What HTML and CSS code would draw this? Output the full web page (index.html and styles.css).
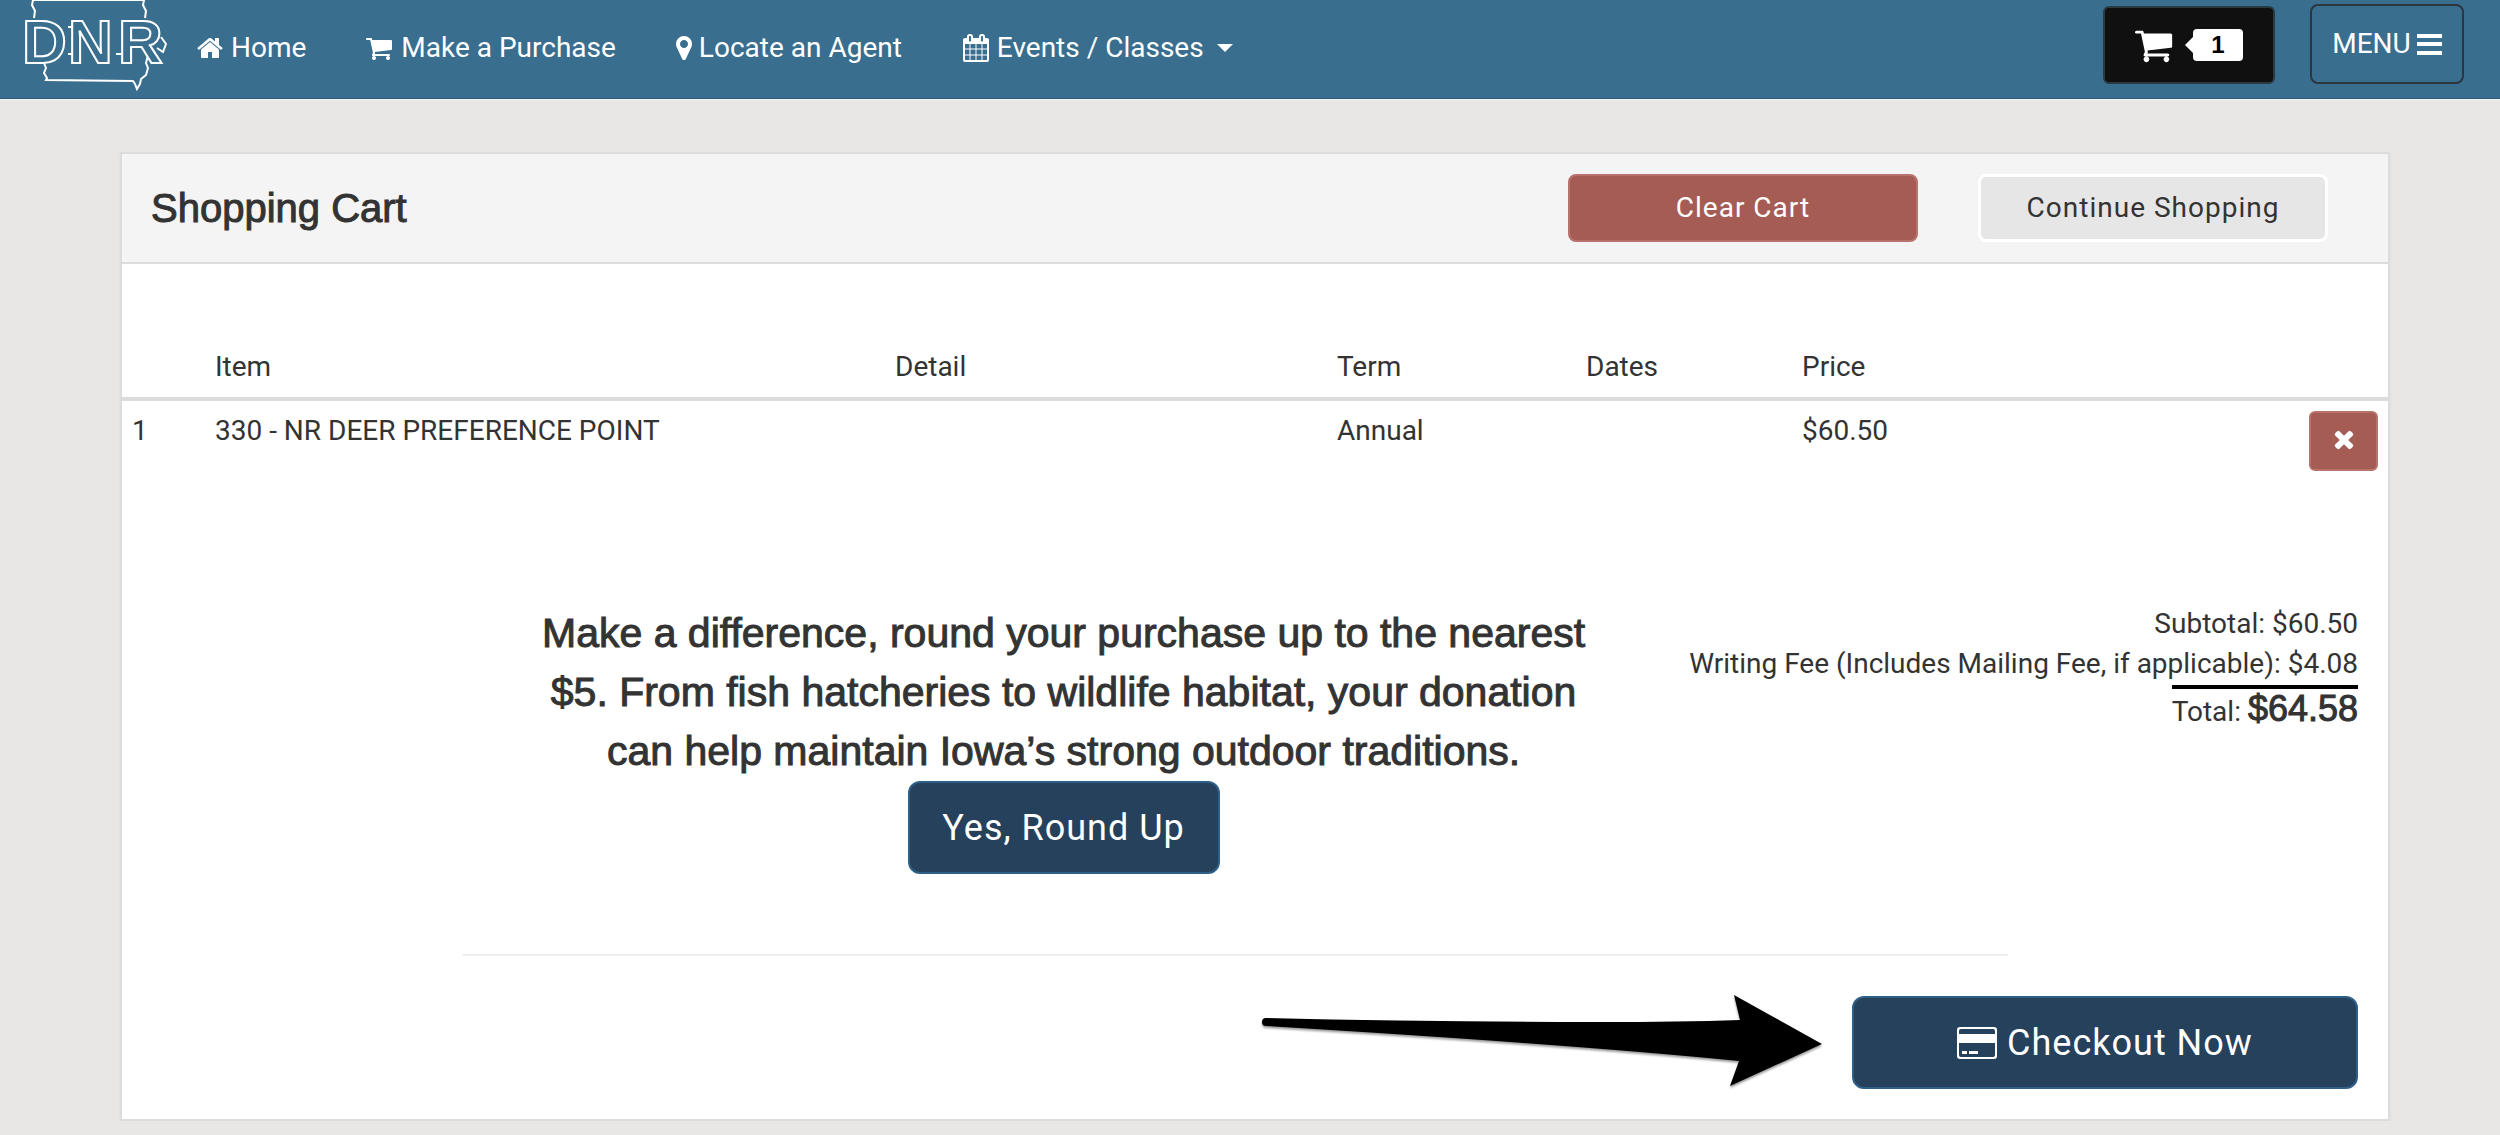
FILE: index.html
```html
<!DOCTYPE html>
<html lang="en">
<head>
<meta charset="utf-8">
<title>Shopping Cart</title>
<link rel="stylesheet" href="styles.css">
</head>
<body>
<svg class="defs" aria-hidden="true">
  <symbol id="cart" viewBox="0 0 1792 1792"><path d="M640 1536q0 52-38 90t-90 38-90-38-38-90 38-90 90-38 90 38 38 90zm896 0q0 52-38 90t-90 38-90-38-38-90 38-90 90-38 90 38 38 90zm128-1088v512q0 24-16.500 42.500t-40.500 21.500l-1044 122q13 60 13 70 0 16-24 64h920q26 0 45 19t19 45-19 45-45 19h-1024q-26 0-45-19t-19-45q0-11 8-31.500t16-36 21.500-40 15.500-29.500l-177-823h-204q-26 0-45-19t-19-45 19-45 45-19h256q16 0 28.500 6.500t19.500 15.500 13 24.500 8 26 5.500 29.500 4.500 26h1201q26 0 45 19t19 45z"/></symbol>
</svg>
<header class="navbar">
  <a class="brand" href="#" aria-label="DNR home">
    <svg class="brand-logo" viewBox="0 0 150 92">
      <path class="state" d="M9 0l-1 5 3 6-1 7M9 0h111l-1 5 3 6-1 7M20 63l2 5-2 5 3 5-1 2 87 1 2 3 2 5 3-5 1-5 5-4 2-7-2-5 2-8M137 37l5 7-3 8-6-4M44 27h5M44 54h5M92 54h6"/>
      <text class="brand-text" x="-2 44 94" y="63">DNR</text>
    </svg>
  </a>
  <nav class="links">
    <a class="link" href="#"><svg class="icon" viewBox="0 0 1792 1792"><path d="M1472 992v480q0 26-19 45t-45 19h-384v-384h-256v384h-384q-26 0-45-19t-19-45v-480q0-1 .5-3t.5-3l575-474 575 474q1 2 1 6zm223-69l-62 74q-8 9-21 11h-3q-13 0-21-7l-692-577-692 577q-12 8-24 7-13-2-21-11l-62-74q-8-10-7-23.500t11-21.500l719-599q32-26 76-26t76 26l244 204v-195q0-14 9-23t23-9h192q14 0 23 9t9 23v408l219 182q10 8 11 21.500t-7 23.500z"/></svg>Home</a>
    <a class="link" href="#"><svg class="icon"><use href="#cart"/></svg>Make a Purchase</a>
    <a class="link" href="#"><svg class="icon icon-narrow" viewBox="384 0 1024 1792"><path d="M1152 640q0-106-75-181t-181-75-181 75-75 181 75 181 181 75 181-75 75-181zm256 0q0 109-33 179l-364 774q-16 33-47.500 52t-67.500 19-67.500-19-46.500-52l-365-774q-33-70-33-179 0-212 150-362t362-150 362 150 150 362z"/></svg>Locate an Agent</a>
    <a class="link" href="#"><svg class="icon" viewBox="0 0 1792 1792"><path d="M192 1664h288v-288h-288v288zm352 0h320v-288h-320v288zm-352-352h288v-320h-288v320zm352 0h320v-320h-320v320zm-352-384h288v-288h-288v288zm736 736h320v-288h-320v288zm-384-736h320v-288h-320v288zm768 736h288v-288h-288v288zm-384-352h320v-320h-320v320zm-352-864v-288q0-13-9.500-22.500t-22.500-9.500h-64q-13 0-22.500 9.500t-9.500 22.500v288q0 13 9.500 22.500t22.500 9.500h64q13 0 22.500-9.500t9.500-22.500zm736 864h288v-320h-288v320zm-384-384h320v-288h-320v288zm384 0h288v-288h-288v288zm32-480v-288q0-13-9.500-22.500t-22.500-9.500h-64q-13 0-22.500 9.500t-9.500 22.500v288q0 13 9.500 22.500t22.500 9.500h64q13 0 22.500-9.500t9.500-22.500zm384-64v1280q0 52-38 90t-90 38h-1408q-52 0-90-38t-38-90v-1280q0-52 38-90t90-38h128v-96q0-66 47-113t113-47h64q66 0 113 47t47 113v96h384v-96q0-66 47-113t113-47h64q66 0 113 47t47 113v96h128q52 0 90 38t38 90z"/></svg>Events / Classes<span class="caret"></span></a>
  </nav>
  <div class="tools">
    <button class="cart-button" type="button" aria-label="Cart, 1 item"><svg class="cart-icon"><use href="#cart"/></svg><span class="badge">1</span></button>
    <button class="menu-button" type="button">MENU<span class="bars"></span></button>
  </div>
</header>
<main class="card">
  <div class="card-head">
    <h1 class="title">Shopping Cart</h1>
    <div class="actions">
      <button class="btn btn-danger" type="button">Clear Cart</button>
      <button class="btn btn-light" type="button">Continue Shopping</button>
    </div>
  </div>
  <table class="items">
    <thead>
      <tr><th class="c-num"></th><th class="c-item">Item</th><th class="c-detail">Detail</th><th class="c-term">Term</th><th class="c-dates">Dates</th><th class="c-price">Price</th><th></th></tr>
    </thead>
    <tbody>
      <tr><td>1</td><td>330 - NR DEER PREFERENCE POINT</td><td></td><td>Annual</td><td></td><td>$60.50</td><td class="remove-cell"><button class="remove" type="button" aria-label="Remove item"><svg class="icon" viewBox="0 0 1792 1792"><path d="M1490 1322q0 40-28 68l-136 136q-28 28-68 28t-68-28l-294-294-294 294q-28 28-68 28t-68-28l-136-136q-28-28-28-68t28-68l294-294-294-294q-28-28-28-68t28-68l136-136q28-28 68-28t68 28l294 294 294-294q28-28 68-28t68 28l136 136q28 28 28 68t-28 68l-294 294 294 294q28 28 28 68z"/></svg></button></td></tr>
    </tbody>
  </table>
  <div class="summary">
    <section class="donate">
      <h2 class="donate-text">Make a difference, round your purchase up to the nearest<br>$5. From fish hatcheries to wildlife habitat, your donation<br>can help maintain Iowa’s strong outdoor traditions.</h2>
      <button class="btn-primary" type="button">Yes, Round Up</button>
    </section>
    <section class="totals">
      <div>Subtotal: $60.50</div>
      <div>Writing Fee (Includes Mailing Fee, if applicable): $4.08</div>
      <div class="total">Total: <strong class="amount">$64.58</strong></div>
    </section>
  </div>
  <hr class="rule">
  <div class="checkout-row">
    <svg class="arrow" viewBox="0 0 564 100"><path d="M6 27Q170 31 340 31Q420 31 480 29L474 4L562 53L470 95L479 70Q320 54 6 35A4 4 0 0 1 6 27z"/></svg>
    <button class="btn-primary checkout" type="button"><svg class="card-icon" viewBox="0 0 40 32"><path fill-rule="evenodd" d="M3 0h34a3 3 0 0 1 3 3v26a3 3 0 0 1-3 3H3a3 3 0 0 1-3-3V3a3 3 0 0 1 3-3zM2 4v3h36V4q0-2-2-2H4q-2 0-2 2zM2 16v12q0 2 2 2h32q2 0 2-2V16zM5 24h5v3H5zM12 24h9v3h-9z"/></svg>Checkout Now</button>
  </div>
</main>
</body>
</html>
```
FILE: styles.css
```css
* { box-sizing: border-box; }
body {
  margin: 0;
  background: #e8e7e6;
  color: #333;
  font: 28px/40px Roboto, sans-serif;
}
button { font: inherit; color: inherit; padding: 0; }
.defs { display: none; }

.navbar {
  display: flex;
  align-items: flex-start;
  height: 99px;
  padding: 0 36px 0 24px;
  background: #396e8f;
  border-bottom: 1px solid #2e5676;
  box-shadow: 0 1px 0 #f2f4f6;
  color: #fff;
}
.brand { width: 144px; }
.brand-logo { display: block; width: 150px; height: 92px; overflow: visible; }
.state { fill: none; stroke: #fff; stroke-width: 2; }
.brand-text {
  font: bold 62px "Liberation Sans", sans-serif;
  fill: #396e8f;
  stroke: #fff;
  stroke-width: 2;
}
.links { display: flex; gap: 60px; padding: 28px 0 0 28px; }
.link { display: flex; align-items: center; gap: 7px; color: #fff; text-decoration: none; }
.icon { width: 28px; height: 28px; fill: currentColor; }
.icon-narrow { width: 16px; }
.caret { margin-left: 6px; border: 8px solid transparent; border-top-color: #fff; border-bottom: 0; }
.tools { display: flex; gap: 35px; margin-left: auto; padding-top: 4px; }
.cart-button {
  display: flex;
  align-items: center;
  justify-content: center;
  gap: 18px;
  width: 172px;
  height: 78px;
  margin-top: 2px;
  border: 2px solid #2a3a44;
  border-radius: 6px;
  background: #101010;
  color: #fff;
}
.cart-icon { width: 40px; height: 40px; fill: #fff; }
.badge {
  position: relative;
  width: 50px;
  border-radius: 4px;
  background: #fff;
  color: #000;
  font: bold 24px/32px "Liberation Sans", sans-serif;
}
.badge::before {
  content: "";
  position: absolute;
  left: -8px;
  top: 8px;
  border: 8px solid transparent;
  border-right-color: #fff;
  border-left: 0;
}
.menu-button {
  display: flex;
  align-items: center;
  justify-content: center;
  gap: 6px;
  width: 154px;
  height: 80px;
  border: 2px solid #2b3640;
  border-radius: 8px;
  background: none;
}
.bars { width: 25px; height: 21px; border: solid #fff; border-width: 4px 0; background: linear-gradient(#fff, #fff) center / 100% 4px no-repeat; }

.card {
  margin: 53px 110px 0 120px;
  border: 2px solid #dcdcdc;
  background: #fff;
  box-shadow: 0 2px 2px #d8d8d8;
}
.card-head {
  display: flex;
  align-items: center;
  justify-content: space-between;
  height: 110px;
  padding: 0 60px 0 29px;
  border-bottom: 2px solid #dcdcdc;
  background: #f4f4f4;
}
.title, .donate-text { margin: 0; font-family: "Liberation Sans", sans-serif; font-weight: 400; -webkit-text-stroke: 1px #333; }
.title { font-size: 40px; }
.actions { display: flex; gap: 60px; }
.btn { width: 350px; height: 68px; border-radius: 8px; letter-spacing: 1px; }
.btn-danger { border: 2px solid #b9736d; background: #a55c55; color: #fff; }
.btn-light { border: 3px solid #fff; background: #e6e6e6; }

.items { width: 100%; margin-top: 73px; border-collapse: collapse; table-layout: fixed; text-align: left; }
.items th { padding: 10px; height: 60px; font-weight: 400; border-bottom: 4px solid #dcdcdc; }
.items td { padding: 10px; vertical-align: top; }
.c-num { width: 83px; }
.c-item { width: 680px; }
.c-detail { width: 442px; }
.c-term { width: 249px; }
.c-dates { width: 216px; }
.c-price { width: 216px; }
.items .remove-cell { text-align: right; }
.remove { display: inline-flex; align-items: flex-start; justify-content: center; width: 69px; height: 60px; padding-top: 12px; border: 2px solid #b9736d; border-radius: 6px; background: #a55c55; color: #fff; }

.summary { display: flex; justify-content: space-between; padding: 123px 30px 0 420px; }
.donate { text-align: center; }
.donate-text { font-size: 41px; line-height: 59px; white-space: nowrap; }
.btn-primary {
  width: 312px;
  height: 93px;
  border: 2px solid #2f5f86;
  border-radius: 12px;
  background: #26415b;
  color: #fff;
  font-size: 36px;
  letter-spacing: 1px;
}
.totals { text-align: right; }
.total { display: inline-block; margin-top: 1px; border-top: 4px solid #000; }
.amount { font: 36px/40px "Liberation Sans", sans-serif; -webkit-text-stroke: 1px #333; }
.rule { width: 1545px; max-width: 70%; height: 2px; margin: 80px 0 0 341px; border: 0; background: #eee; }
.checkout-row { display: flex; justify-content: flex-end; gap: 28px; padding: 40px 30px 30px; }
.arrow { width: 564px; height: 100px; margin: -5px 0; filter: drop-shadow(0 2px 1px #999); }
.checkout { display: flex; align-items: center; justify-content: center; gap: 10px; width: 506px; }
.card-icon { width: 40px; height: 32px; fill: #fff; }
```
